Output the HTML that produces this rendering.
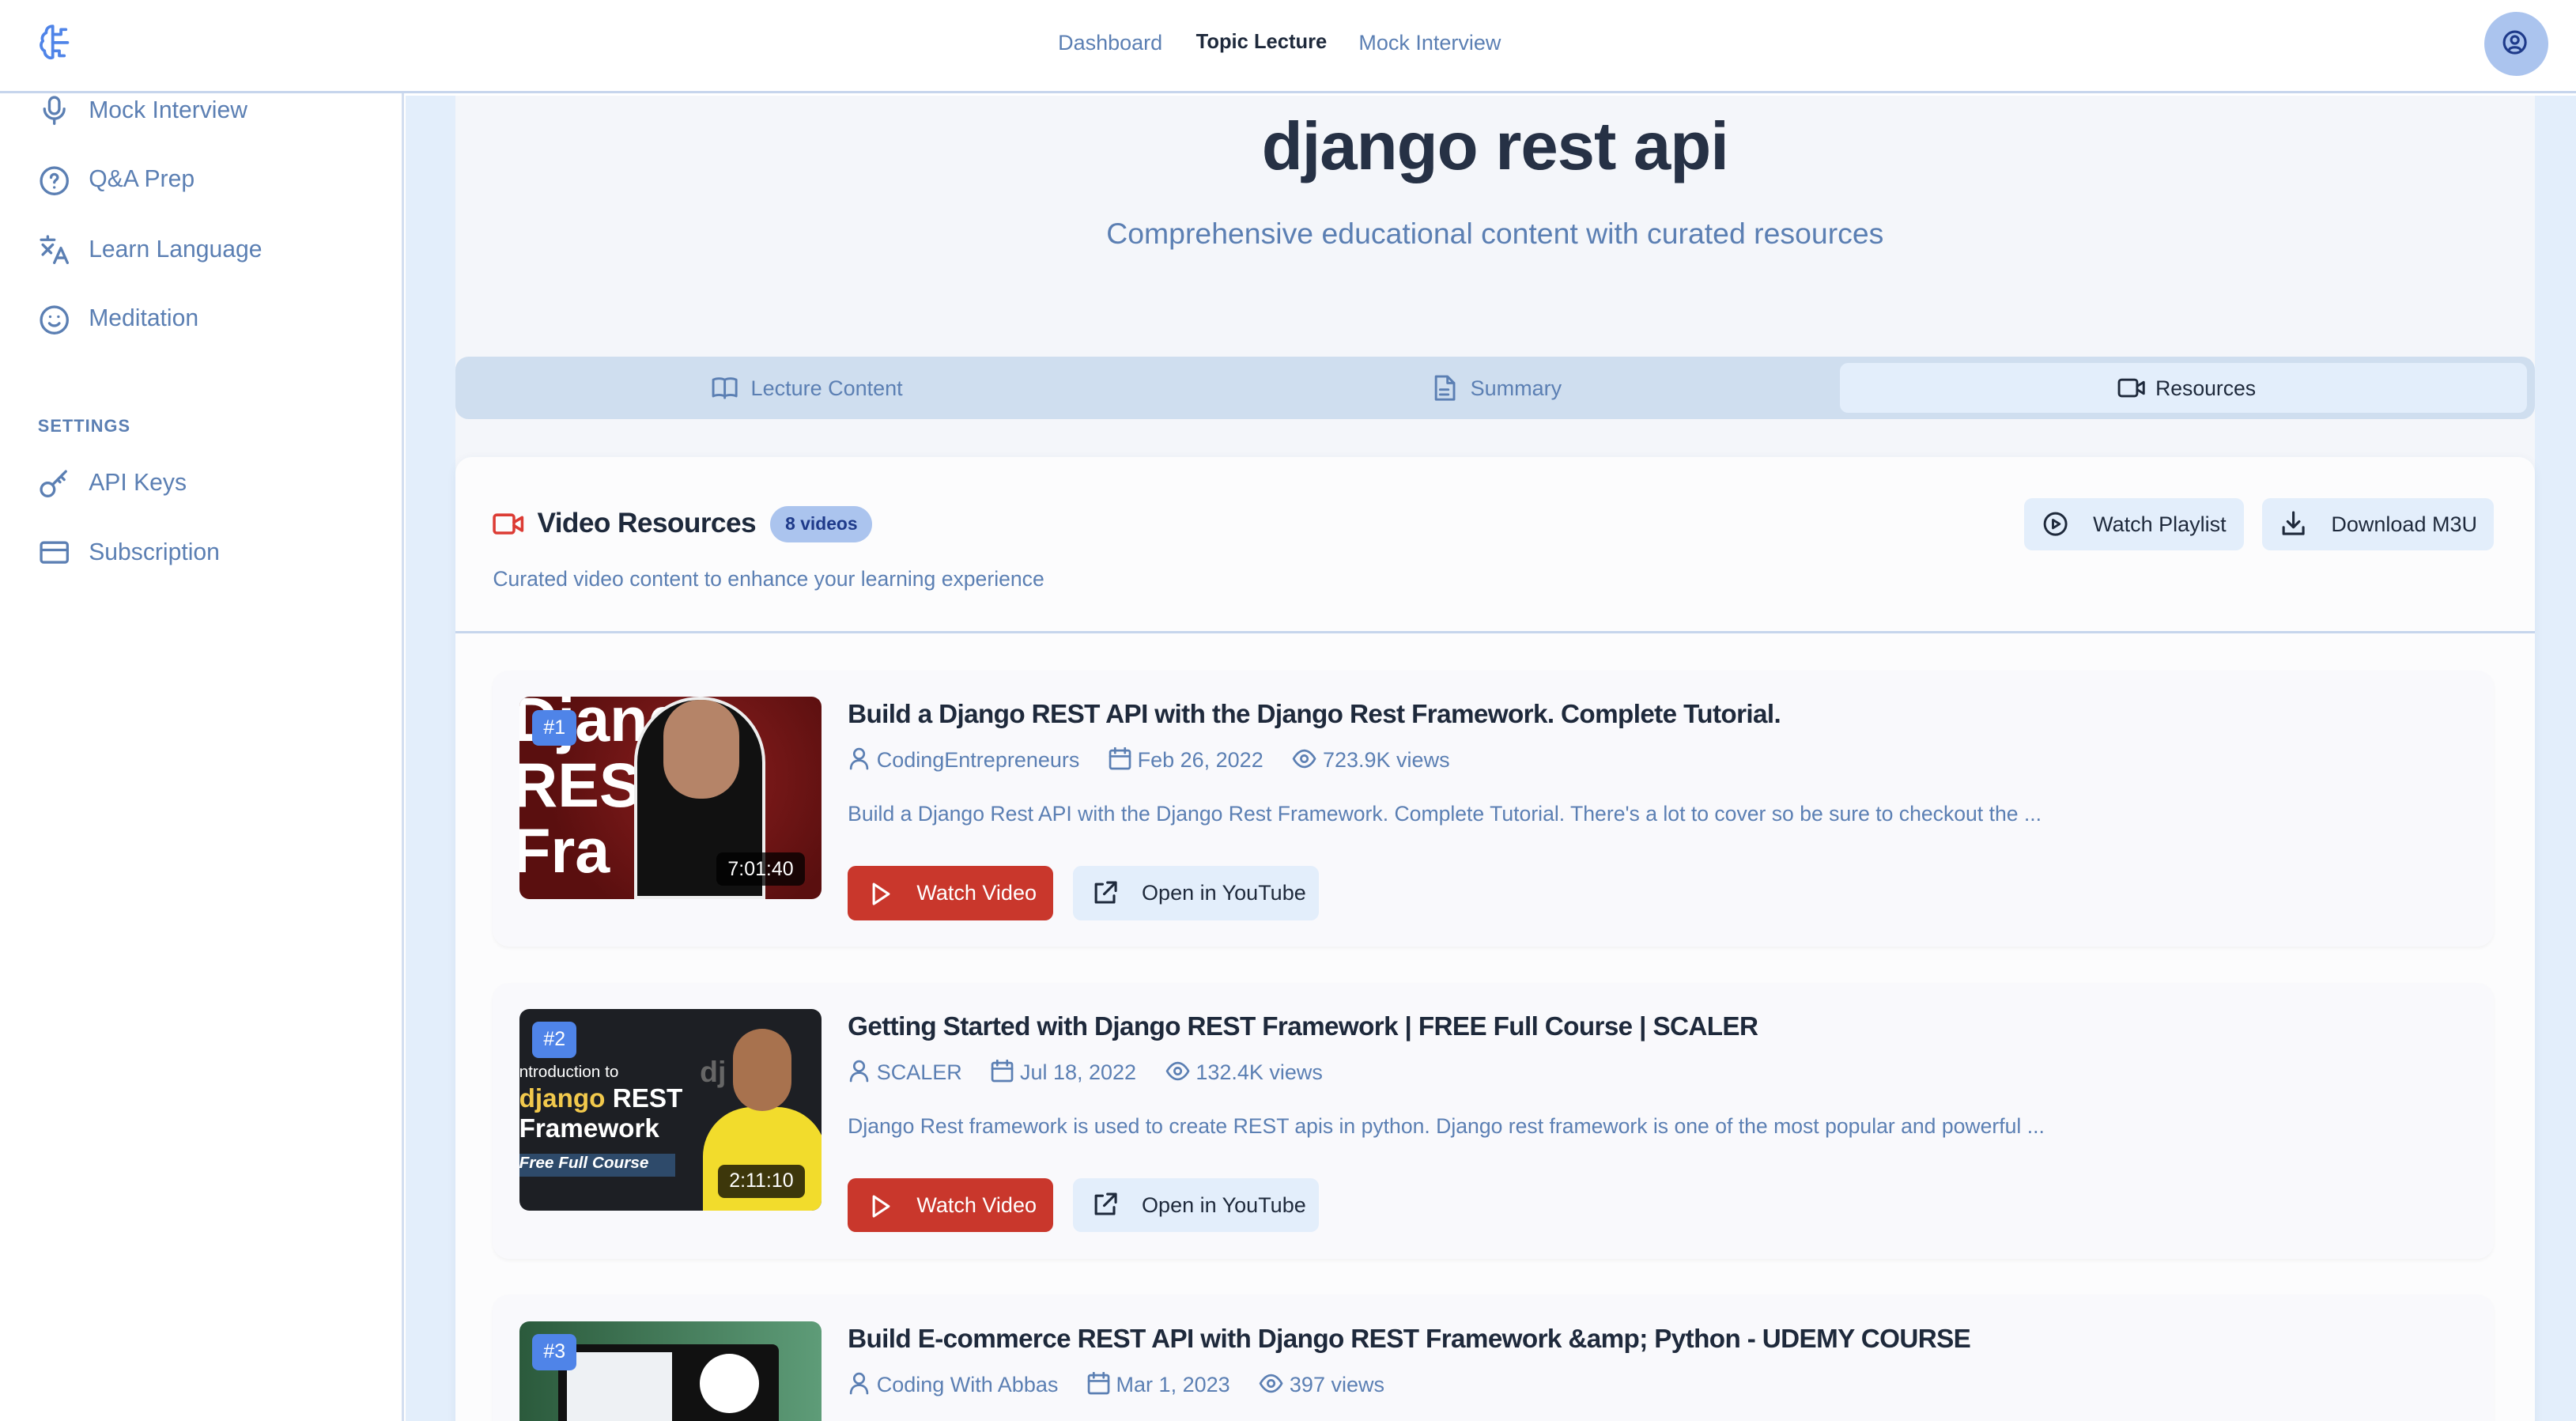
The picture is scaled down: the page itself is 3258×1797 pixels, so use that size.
<!DOCTYPE html>
<html><head><meta charset="utf-8"><style>
*{box-sizing:border-box;margin:0;padding:0}
html,body{width:3258px;height:1797px;overflow:hidden;background:#fff}
#root{zoom:2.0778;width:1568px;height:865px;position:relative;font-family:"Liberation Sans",sans-serif;color:#1e293b;overflow:hidden}
.a{position:absolute;white-space:nowrap}
.sb{color:#5b7fb3;font-size:14.5px}
.ic{position:absolute;fill:none;stroke-width:1.6;stroke-linecap:round;stroke-linejoin:round}
.btn{position:absolute;border-radius:5px;font-size:14px}
.item{position:absolute;left:300px;width:1218px;height:168px;background:#f9f9fc;border-radius:10px;box-shadow:0 1px 2px rgba(0,0,0,.04)}
.thumb{position:absolute;left:16px;top:16px;width:184px;height:123px;border-radius:6px;overflow:hidden}
.num{position:absolute;left:8px;top:8px;width:27px;height:22px;background:#4f84e8;color:#fff;border-radius:4px;font-size:12px;text-align:center;line-height:22px}
.dur{position:absolute;right:10px;bottom:8px;background:rgba(0,0,0,.75);color:#fff;border-radius:4px;font-size:12px;padding:3px 7px}
.t{position:absolute;left:216px;top:18px;font-size:16px;letter-spacing:-.3px;font-weight:bold;color:#1e293b;white-space:nowrap}
.m{position:absolute;left:216px;top:47px;font-size:13px;color:#5b7fb3;white-space:nowrap}
.m span{margin-right:14px}
.d{position:absolute;left:216px;top:80px;font-size:12.8px;color:#5b7fb3;white-space:nowrap}
.wv{position:absolute;left:216px;top:119px;width:125px;height:33px;background:#c9372c;border-radius:5px;color:#fff;font-size:13px;line-height:33px;padding-left:42px}
.oy{position:absolute;left:353px;top:119px;width:150px;height:33px;background:#e3eefb;border-radius:5px;color:#1e293b;font-size:13px;line-height:33px;padding-left:42px}
.mi{position:relative;display:inline-block;vertical-align:-2px;fill:none;stroke:#5b7fb3;stroke-width:1.3;stroke-linecap:round;stroke-linejoin:round}
</style></head><body><div id="root">
<!-- header -->
<div class="a" style="left:0;top:0;width:1568px;height:57px;background:#fff;border-bottom:1.5px solid #c6d5ec"></div>
<svg class="ic" style="left:23px;top:14px;stroke:#4f84e8;stroke-width:1.8" width="22" height="24" viewBox="0 0 22 24"><path d="M9 2c-3 0-4 2-4 4-2 1-3 3-2 5-2 2-1 5 1 6 0 3 3 5 5 4V2z"/><path d="M9 7h5M9 12h6M9 17h4M14 7V4h3M15 12h3M13 17v3h3"/></svg>
<div class="a" style="left:644px;top:19px;font-size:13px;color:#5b7fb3">Dashboard</div>
<div class="a" style="left:728px;top:19px;font-size:12.3px;font-weight:bold;color:#1e293b">Topic Lecture</div>
<div class="a" style="left:827px;top:19px;font-size:13px;color:#5b7fb3">Mock Interview</div>
<div class="a" style="left:1512px;top:7px;width:39px;height:39px;border-radius:50%;background:#abc4ee"></div>
<svg class="ic" style="left:1523px;top:18px;stroke:#1e3a8a;stroke-width:1.5" width="16" height="16" viewBox="0 0 16 16"><circle cx="8" cy="8" r="6.5"/><circle cx="8" cy="6.5" r="2.2"/><path d="M4.5 12.5c1-2 6-2 7 0"/></svg>
<!-- sidebar -->
<div class="a" style="left:0;top:57px;width:246px;height:808px;background:#fff;border-right:1.5px solid #d3def0"></div>
<svg class="ic" style="left:24px;top:58px;stroke:#5b7fb3" width="18" height="18" viewBox="0 0 18 18"><rect x="6" y="1" width="6" height="10" rx="3"/><path d="M3 8a6 6 0 0012 0M9 14v3"/></svg>
<div class="a sb" style="left:54px;top:59px">Mock Interview</div>
<svg class="ic" style="left:24px;top:101px;stroke:#5b7fb3" width="18" height="18" viewBox="0 0 18 18"><circle cx="9" cy="9" r="8"/><path d="M7 7a2 2 0 114 0c0 1.5-2 1.5-2 3M9 13h0"/></svg>
<div class="a sb" style="left:54px;top:101px">Q&amp;A Prep</div>
<svg class="ic" style="left:24px;top:143px;stroke:#5b7fb3" width="18" height="18" viewBox="0 0 18 18"><path d="M1 3h8M5 1v2M2 6l5 5M8 6l-6 6M9 17l4-9 4 9M10.5 14h5"/></svg>
<div class="a sb" style="left:54px;top:144px">Learn Language</div>
<svg class="ic" style="left:24px;top:186px;stroke:#5b7fb3" width="18" height="18" viewBox="0 0 18 18"><circle cx="9" cy="9" r="8"/><path d="M6 11c1.5 2 4.5 2 6 0M6.5 7h0M11.5 7h0"/></svg>
<div class="a sb" style="left:54px;top:186px">Meditation</div>
<div class="a" style="left:23px;top:253px;font-size:10.5px;font-weight:bold;color:#5b7fb3;letter-spacing:.5px">SETTINGS</div>
<svg class="ic" style="left:24px;top:285px;stroke:#5b7fb3" width="18" height="18" viewBox="0 0 18 18"><circle cx="5" cy="13" r="4"/><path d="M8 10l8-8M13 5l2 2M11 7l1.5 1.5"/></svg>
<div class="a sb" style="left:54px;top:286px">API Keys</div>
<svg class="ic" style="left:24px;top:328px;stroke:#5b7fb3" width="18" height="16" viewBox="0 0 18 16"><rect x="1" y="2" width="16" height="12" rx="1.5"/><path d="M1 6.5h16"/></svg>
<div class="a sb" style="left:54px;top:328px">Subscription</div>
<!-- main -->
<div class="a" style="left:247px;top:58px;width:1321px;height:808px;background:#e3eefb"></div>
<div class="a" style="left:277px;top:58px;width:1266px;height:808px;background:#f4f6fa"></div>
<div class="a" style="left:277px;top:66px;width:1266px;text-align:center;font-size:41px;font-weight:bold;color:#263145;letter-spacing:-.5px">django rest api</div>
<div class="a" style="left:277px;top:132px;width:1266px;text-align:center;font-size:18px;color:#5b7fb3">Comprehensive educational content with curated resources</div>
<!-- tabs -->
<div class="a" style="left:277px;top:217px;width:1266px;height:38px;background:#cfdeef;border-radius:8px"></div>
<div class="a" style="left:1120px;top:221px;width:418px;height:30px;background:#e3eefb;border-radius:5px"></div>
<svg class="ic" style="left:433px;top:228px;stroke:#5b7fb3;stroke-width:1.4" width="16" height="16" viewBox="0 0 16 16"><path d="M8 3C6 2 3 2 1 3v10c2-1 5-1 7 0 2-1 5-1 7 0V3c-2-1-5-1-7 0zM8 3v11"/></svg>
<div class="a" style="left:457px;top:229px;font-size:13px;color:#5b7fb3">Lecture Content</div>
<svg class="ic" style="left:872px;top:228px;stroke:#5b7fb3;stroke-width:1.4" width="14" height="16" viewBox="0 0 14 16"><path d="M2 1h7l4 4v10H2zM9 1v4h4M4.5 9h5M4.5 12h5"/></svg>
<div class="a" style="left:895px;top:229px;font-size:13px;color:#5b7fb3">Summary</div>
<svg class="ic" style="left:1289px;top:229px;stroke:#1e293b;stroke-width:1.4" width="18" height="14" viewBox="0 0 18 14"><rect x="1" y="2" width="11" height="10" rx="1.5"/><path d="M12 6l4-2.5v7L12 8"/></svg>
<div class="a" style="left:1312px;top:229px;font-size:12.8px;color:#1e293b">Resources</div>
<!-- card -->
<div class="a" style="left:277px;top:278px;width:1266px;height:600px;background:#fcfcfd;border-radius:10px;box-shadow:0 1px 6px rgba(30,60,120,.06)"></div>
<svg class="ic" style="left:300px;top:311px;stroke:#dc3b34;stroke-width:1.7" width="20" height="16" viewBox="0 0 20 16"><rect x="1" y="2.5" width="12" height="11" rx="1.5"/><path d="M13 7l5-3v8l-5-3"/></svg>
<div class="a" style="left:327px;top:309px;font-size:17px;letter-spacing:-.3px;font-weight:bold;color:#1e293b">Video Resources</div>
<div class="a" style="left:469px;top:308px;width:62px;height:22px;background:#abc4ee;border-radius:11px;color:#1e3a8a;font-size:11px;font-weight:bold;text-align:center;line-height:22px">8 videos</div>
<div class="a" style="left:300px;top:345px;font-size:12.8px;color:#5b7fb3">Curated video content to enhance your learning experience</div>
<div class="btn" style="left:1232px;top:303px;width:134px;height:32px;background:#e3eefb"></div>
<svg class="ic" style="left:1243px;top:311px;stroke:#1e293b;stroke-width:1.4" width="16" height="16" viewBox="0 0 16 16"><circle cx="8" cy="8" r="6.5"/><path d="M6.5 5.5l4 2.5-4 2.5z"/></svg>
<div class="a" style="left:1274px;top:312px;font-size:13px;color:#1e293b">Watch Playlist</div>
<div class="btn" style="left:1377px;top:303px;width:141px;height:32px;background:#e3eefb"></div>
<svg class="ic" style="left:1388px;top:311px;stroke:#1e293b;stroke-width:1.5" width="16" height="16" viewBox="0 0 16 16"><path d="M8 1v9M4.5 6.5L8 10l3.5-3.5M2 10v4h12v-4"/></svg>
<div class="a" style="left:1419px;top:312px;font-size:13px;color:#1e293b">Download M3U</div>
<div class="a" style="left:277px;top:384px;width:1266px;height:1.5px;background:#c6d5ec"></div>

<!-- item1 -->
<div class="item" style="top:408px">
 <div class="thumb" style="background:radial-gradient(circle at 60% 40%,#8b1e1e,#5a0f0f 70%)">
  <div class="a" style="left:-4px;top:-6px;font-size:38px;font-weight:bold;color:#fff;line-height:40px">Django<br>REST<br>Fra</div>
  <div class="a" style="left:70px;top:0;width:80px;height:123px;background:#111;border-radius:40px 40px 0 0;border:2px solid #eee"></div>
  <div class="a" style="left:88px;top:2px;width:46px;height:60px;background:#b58468;border-radius:22px"></div>
  <div class="num">#1</div><div class="dur">7:01:40</div></div>
 <div class="t">Build a Django REST API with the Django Rest Framework. Complete Tutorial.</div>
 <div class="m">
  <svg class="mi" width="14" height="14" viewBox="0 0 14 14"><circle cx="7" cy="4" r="3"/><path d="M2 13c0-3 2-5 5-5s5 2 5 5"/></svg> <span>CodingEntrepreneurs</span>
  <svg class="mi" width="14" height="14" viewBox="0 0 14 14"><rect x="1" y="2" width="12" height="11" rx="1"/><path d="M1 5.5h12M4 0.5v3M10 0.5v3"/></svg> <span>Feb 26, 2022</span>
  <svg class="mi" width="15" height="14" viewBox="0 0 15 14"><path d="M1 7s2.5-5 6.5-5S14 7 14 7s-2.5 5-6.5 5S1 7 1 7z"/><circle cx="7.5" cy="7" r="2"/></svg> <span>723.9K views</span></div>
 <div class="d">Build a Django Rest API with the Django Rest Framework. Complete Tutorial. There's a lot to cover so be sure to checkout the ...</div>
 <div class="wv"><svg class="ic" style="left:14px;top:10px;stroke:#fff;stroke-width:1.5" width="12" height="14" viewBox="0 0 12 14"><path d="M2 1l9 6-9 6z"/></svg>Watch Video</div>
 <div class="oy"><svg class="ic" style="left:12px;top:9px;stroke:#1e293b;stroke-width:1.5" width="15" height="15" viewBox="0 0 15 15"><path d="M6 2H2v11h11V9M9 1h5v5M14 1L7 8"/></svg>Open in YouTube</div>
</div>
<!-- item2 -->
<div class="item" style="top:598px">
 <div class="thumb" style="background:#1d1f24">
  <div class="a" style="left:0;top:33px;font-size:10px;color:#fff">ntroduction to</div>
  <div class="a" style="left:0;top:46px;font-size:16px;font-weight:bold;color:#f2c94c">django <span style="color:#fff">REST</span></div>
  <div class="a" style="left:0;top:64px;font-size:16px;font-weight:bold;color:#fff">Framework</div>
  <div class="a" style="left:0;top:88px;width:95px;height:14px;background:#2e4a6a;font-size:10px;font-style:italic;font-weight:bold;color:#fff">Free Full Course</div>
  <div class="a" style="left:112px;top:60px;width:75px;height:70px;background:#f2dc2c;border-radius:30px 30px 0 0"></div>
  <div class="a" style="left:130px;top:12px;width:36px;height:50px;background:#a8724e;border-radius:18px"></div>
  <div class="a" style="left:110px;top:28px;font-size:18px;font-weight:bold;color:#666">dj</div>
  <div class="num">#2</div><div class="dur">2:11:10</div></div>
 <div class="t">Getting Started with Django REST Framework | FREE Full Course | SCALER</div>
 <div class="m">
  <svg class="mi" width="14" height="14" viewBox="0 0 14 14"><circle cx="7" cy="4" r="3"/><path d="M2 13c0-3 2-5 5-5s5 2 5 5"/></svg> <span>SCALER</span>
  <svg class="mi" width="14" height="14" viewBox="0 0 14 14"><rect x="1" y="2" width="12" height="11" rx="1"/><path d="M1 5.5h12M4 0.5v3M10 0.5v3"/></svg> <span>Jul 18, 2022</span>
  <svg class="mi" width="15" height="14" viewBox="0 0 15 14"><path d="M1 7s2.5-5 6.5-5S14 7 14 7s-2.5 5-6.5 5S1 7 1 7z"/><circle cx="7.5" cy="7" r="2"/></svg> <span>132.4K views</span></div>
 <div class="d">Django Rest framework is used to create REST apis in python. Django rest framework is one of the most popular and powerful ...</div>
 <div class="wv"><svg class="ic" style="left:14px;top:10px;stroke:#fff;stroke-width:1.5" width="12" height="14" viewBox="0 0 12 14"><path d="M2 1l9 6-9 6z"/></svg>Watch Video</div>
 <div class="oy"><svg class="ic" style="left:12px;top:9px;stroke:#1e293b;stroke-width:1.5" width="15" height="15" viewBox="0 0 15 15"><path d="M6 2H2v11h11V9M9 1h5v5M14 1L7 8"/></svg>Open in YouTube</div>
</div>
<!-- item3 -->
<div class="item" style="top:788px">
 <div class="thumb" style="background:linear-gradient(90deg,#2b5a3c,#5e9c78)">
  <div class="a" style="left:24px;top:14px;width:134px;height:80px;background:#111;border-radius:4px"></div>
  <div class="a" style="left:29px;top:19px;width:64px;height:70px;background:#eef1f4"></div>
  <div class="a" style="left:110px;top:20px;width:36px;height:36px;background:#fff;border-radius:50%"></div>
  <div class="num">#3</div></div>
 <div class="t">Build E-commerce REST API with Django REST Framework &amp;amp; Python - UDEMY COURSE</div>
 <div class="m">
  <svg class="mi" width="14" height="14" viewBox="0 0 14 14"><circle cx="7" cy="4" r="3"/><path d="M2 13c0-3 2-5 5-5s5 2 5 5"/></svg> <span>Coding With Abbas</span>
  <svg class="mi" width="14" height="14" viewBox="0 0 14 14"><rect x="1" y="2" width="12" height="11" rx="1"/><path d="M1 5.5h12M4 0.5v3M10 0.5v3"/></svg> <span>Mar 1, 2023</span>
  <svg class="mi" width="15" height="14" viewBox="0 0 15 14"><path d="M1 7s2.5-5 6.5-5S14 7 14 7s-2.5 5-6.5 5S1 7 1 7z"/><circle cx="7.5" cy="7" r="2"/></svg> <span>397 views</span></div>
</div>
</div></body></html>
